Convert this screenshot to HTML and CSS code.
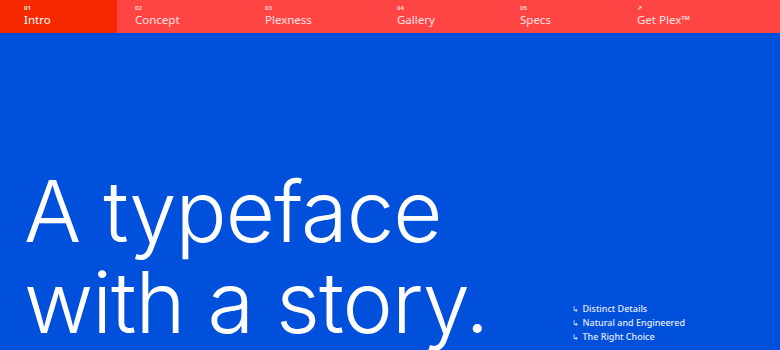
FILE: index.html
```html
<!DOCTYPE html>
<html lang="en">
<head>
<meta charset="utf-8">
<title>IBM Plex</title>
<link rel="stylesheet" href="styles.css">
</head>
<body>
<nav class="nav">
  <a class="nav-item active w1" href="#"><span class="num">01</span><span class="label">Intro</span></a>
  <a class="nav-item w2" href="#"><span class="num">02</span><span class="label">Concept</span></a>
  <a class="nav-item w3" href="#"><span class="num">03</span><span class="label">Plexness</span></a>
  <a class="nav-item w4" href="#"><span class="num">04</span><span class="label">Gallery</span></a>
  <a class="nav-item w5" href="#"><span class="num">05</span><span class="label">Specs</span></a>
  <a class="nav-item w6" href="#"><span class="num">↗</span><span class="label">Get Plex™</span></a>
</nav>
<main class="hero">
  <h1 class="title"><span class="line">A typeface</span><span class="line">with a story.</span></h1>
  <ul class="links">
    <li><span class="arrow">↳</span>Distinct Details</li>
    <li><span class="arrow">↳</span>Natural and Engineered</li>
    <li><span class="arrow">↳</span>The Right Choice</li>
  </ul>
</main>
</body>
</html>
```
FILE: styles.css
```css
* { box-sizing: border-box; }
html, body { margin: 0; padding: 0; }
body {
  width: 780px;
  height: 350px;
  overflow: hidden;
  background: #0050dc;
  font-family: "Noto Sans", sans-serif;
  color: #fff;
}
.nav {
  display: flex;
  height: 33px;
  background: #ff4444;
}
.nav-item {
  display: flex;
  flex-direction: column;
  padding: 5px 0 0 24px;
  color: #ffe4e4;
  text-decoration: none;
}
.nav-item.active { background: #f62800; color: #fff; }
.w1 { width: 117px; }
.w2 { width: 130px; padding-left: 18px; }
.w3 { width: 132px; padding-left: 18px; }
.w4 { width: 123px; padding-left: 18px; }
.w5 { width: 117px; padding-left: 18px; }
.w6 { flex: 1; padding-left: 18px; }
.num {
  font-size: 6px;
  line-height: 6px;
  font-weight: 600;
}
.label {
  font-size: 11.5px;
  line-height: 14px;
  margin-top: 2px;
}
.hero {
  height: 317px;
  display: flex;
  align-items: flex-end;
  justify-content: space-between;
  padding: 0 0 0 24px;
}
.title {
  margin: 0 0 2px 0;
  font-family: Inter, sans-serif;
  font-weight: 300;
  font-size: 85px;
  line-height: 91px;
  letter-spacing: -1px;
}
.line { display: block; height: 91px; }
.links {
  list-style: none;
  margin: 0 95px 6px 0;
  padding: 0;
  font-size: 9px;
  line-height: 14px;
  font-weight: 500;
  color: #e6ecff;
}
.arrow {
  display: inline-block;
  width: 11px;
  font-size: 8px;
}
```
